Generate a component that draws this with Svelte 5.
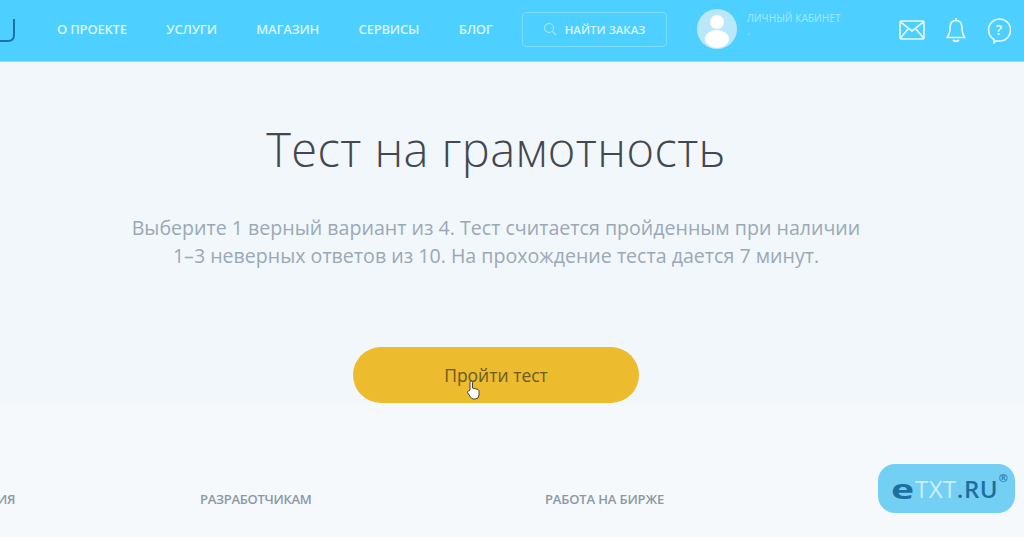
<script>
  const navItems = ["О ПРОЕКТЕ", "УСЛУГИ", "МАГАЗИН", "СЕРВИСЫ", "БЛОГ"]
</script>

<div class="page">
  <header class="topbar">
    <svg class="logo" width="16" height="34" viewBox="0 0 16 34" aria-hidden="true">
      <path d="M-4 31H8Q14 31 14 25V9" fill="none" stroke="#1f6fa8" stroke-width="2" />
    </svg>
    <nav class="nav">
      {#each navItems as item}
        <span>{item}</span>
      {/each}
    </nav>
    <div class="find">
      <svg width="14" height="14" viewBox="0 0 14 14" aria-hidden="true">
        <circle cx="6" cy="6" r="4.5" fill="none" stroke="#a5e4fb" stroke-width="1.2" />
        <path d="M9.4 9.4L13 13" stroke="#a5e4fb" stroke-width="1.2" />
      </svg>
      <span>НАЙТИ ЗАКАЗ</span>
    </div>
    <div class="account">
      <svg width="40" height="40" viewBox="0 0 40 40" aria-hidden="true">
        <circle cx="20" cy="20" r="20" fill="#b9e8fa" />
        <circle cx="20" cy="13" r="7" fill="#fff" />
        <ellipse cx="20" cy="30" rx="12" ry="9" fill="#fff" />
      </svg>
      <div class="account-text">
        <span>ЛИЧНЫЙ КАБИНЕТ</span>
        <span class="dot">↓</span>
      </div>
    </div>
    <div class="icons">
      <svg width="26" height="20" viewBox="0 0 26 20" aria-hidden="true">
        <rect x="1" y="1" width="24" height="18" rx="1.5" fill="none" stroke="#e8f8fe" stroke-width="1.6" />
        <path d="M1.5 2L13 11L24.5 2M1.5 18L9.5 8.5M24.5 18L16.5 8.5" fill="none" stroke="#e8f8fe" stroke-width="1.6" />
      </svg>
      <svg width="22" height="26" viewBox="0 0 22 26" aria-hidden="true">
        <path d="M2 20.5Q5 17 5 11Q5 3.5 11 3.5Q17 3.5 17 11Q17 17 20 20.5Z" fill="none" stroke="#e8f8fe" stroke-width="1.7" stroke-linejoin="round" />
        <path d="M8 23Q11 25.5 14 23" fill="none" stroke="#e8f8fe" stroke-width="2" />
        <path d="M11 1V3.5" stroke="#e8f8fe" stroke-width="1.6" />
      </svg>
      <svg width="24" height="27" viewBox="0 0 24 27" aria-hidden="true">
        <path d="M7 22.5A11 11 0 1 1 12 24H8.500L7 26Z" fill="none" stroke="#e8f8fe" stroke-width="1.6" stroke-linejoin="round" />
        <text x="12" y="18" text-anchor="middle" class="qmark">?</text>
      </svg>
    </div>
  </header>

  <main class="intro">
    <h1>Тест на грамотность</h1>
    <p>
      Выберите 1 верный вариант из 4. Тест считается пройденным при наличии<br />
      1–3 неверных ответов из 10. На прохождение теста дается 7 минут.
    </p>
    <button class="start">
      Пройти тест
      <svg class="cursor" width="14" height="20" viewBox="0 0 14 20" aria-hidden="true">
        <path d="M4 10V2.500Q4 1 5.200 1Q6.500 1 6.500 2.500V8L12 9.500Q13 10 13 11.500V15Q13 19 9 19H7.500Q5.500 19 4.500 17L1.500 12.500Q1 11 2.500 11Z" fill="#fff" stroke="#4a4030" stroke-width="1" />
      </svg>
    </button>
  </main>

  <footer class="foot">
    <span class="first">ИЯ</span>
    <span class="second">РАЗРАБОТЧИКАМ</span>
    <span class="third">РАБОТА НА БИРЖЕ</span>
  </footer>

  <div class="badge">
    <span class="e">e</span><span class="txt">TXT</span><span class="ru">.RU</span><sup>®</sup>
  </div>
</div>

<style>
  :global(body) {
    margin: 0;
    background: #f5f9fc;
  }
  .page {
    position: relative;
    width: 1024px;
    height: 537px;
    overflow: hidden;
    font-family: "Open Sans", sans-serif;
  }
  .topbar {
    display: flex;
    align-items: center;
    box-sizing: border-box;
    height: 62px;
    padding-bottom: 3px;
    background: #4dd0ff;
    border-bottom: 1px solid #8fdff9;
    color: #d8f5ff;
  }
  .logo {
    flex: none;
    margin-bottom: 4px;
  }
  .nav {
    display: flex;
    gap: 39.5px;
    margin-left: 41px;
    font-size: 13px;
    font-weight: 600;
    letter-spacing: -0.2px;
    white-space: nowrap;
  }
  .find {
    display: flex;
    align-items: center;
    gap: 8px;
    box-sizing: border-box;
    width: 145px;
    height: 35px;
    margin-left: 29px;
    padding-left: 20px;
    border: 1px solid #7bdcfb;
    border-radius: 4px;
    font-size: 11.5px;
    font-weight: 600;
    white-space: nowrap;
  }
  .account {
    display: flex;
    gap: 10px;
    margin-left: 30px;
    width: 202px;
  }
  .account-text {
    display: flex;
    flex-direction: column;
    gap: 3px;
    padding-top: 2px;
    font-size: 10.2px;
    color: #a5e8fc;
    white-space: nowrap;
  }
  .dot {
    font-size: 7px;
  }
  .icons {
    display: flex;
    align-items: center;
    gap: 20px;
    margin-top: 2px;
  }
  .qmark {
    font-family: "Open Sans", sans-serif;
    font-size: 14px;
    font-weight: 600;
    fill: #e8f8fe;
  }
  .intro {
    display: flex;
    flex-direction: column;
    align-items: center;
    height: 343px;
    background: #f2f7fb;
    box-sizing: border-box;
    padding: 55px 32px 0 0;
  }
  h1 {
    margin: 0;
    font-size: 47px;
    line-height: 64px;
    font-weight: 300;
    letter-spacing: 0.45px;
    color: #43484f;
  }
  p {
    margin: 33px 0 0;
    text-align: center;
    font-size: 19.6px;
    line-height: 28px;
    color: #9aa9b6;
    white-space: nowrap;
  }
  .start {
    position: relative;
    width: 286px;
    height: 56px;
    margin-top: 77px;
    border: none;
    border-radius: 28px;
    background: #ecbb2e;
    color: #6b5a22;
    font-family: inherit;
    font-size: 17.5px;
  }
  .cursor {
    position: absolute;
    left: 113px;
    top: 33px;
  }
  .foot {
    display: flex;
    padding-top: 85px;
    font-size: 13px;
    font-weight: 600;
    letter-spacing: -0.3px;
    color: #8c98a4;
    white-space: nowrap;
  }
  .first {
    width: 200px;
    margin-left: -3px;
    padding-left: 3px;
    text-indent: -3px;
  }
  .second {
    width: 345px;
  }
  .third {
    letter-spacing: -0.15px;
  }
  .badge {
    position: absolute;
    left: 878px;
    top: 464px;
    display: flex;
    align-items: center;
    width: 137px;
    height: 49px;
    box-sizing: border-box;
    padding-left: 13px;
    border-radius: 17px;
    background: #74cff5;
    font-size: 24px;
    font-weight: 600;
    letter-spacing: 0.5px;
    white-space: nowrap;
  }
  .e {
    display: inline-block;
    width: 24px;
    color: #1d6f9e;
    font-weight: 700;
    font-size: 26px;
    line-height: 20px;
    transform: scaleX(1.5);
    transform-origin: left center;
  }
  .txt {
    color: #cdeffb;
    font-weight: 400;
  }
  .ru {
    color: #1d6f9e;
  }
  sup {
    position: absolute;
    right: 7px;
    top: 8px;
    font-size: 11px;
    line-height: 12px;
    letter-spacing: 0;
    color: #1d6f9e;
  }
</style>
